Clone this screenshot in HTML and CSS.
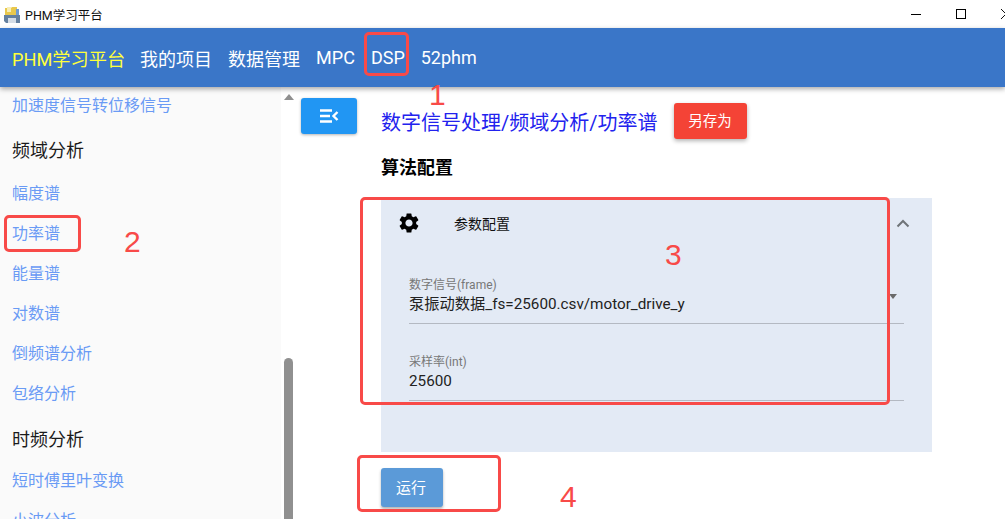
FILE: index.html
```html
<!DOCTYPE html>
<html lang="zh">
<head>
<meta charset="utf-8">
<title>PHM学习平台</title>
<link rel="stylesheet" href="styles.css">
</head>
<body>
<div class="app">
  <header class="titlebar">
    <svg class="app-icon" width="16" height="17" viewBox="0 0 16 17">
      <path d="M1 2h6l1-1h5v9H1z" fill="#e9c84c"/>
      <rect x="3" y="1" width="4" height="5" fill="#f7eeb8"/>
      <rect x="12" y="3" width="3" height="7" fill="#6f9bd0"/>
      <path d="M0 9h16v8H2l-2-2z" fill="#64809f"/>
      <rect x="4" y="12" width="8" height="5" fill="#d5dde6"/>
    </svg>
    <span class="window-title">PHM学习平台</span>
    <div class="window-controls">
      <span class="ctl-min"></span>
      <span class="ctl-max"></span>
      <svg class="ctl-close" width="10" height="10" viewBox="0 0 10 10"><path d="M0 0l10 10M10 0L0 10" stroke="#111" fill="none"/></svg>
    </div>
  </header>
  <nav class="toolbar">
    <a class="brand">PHM学习平台</a>
    <a class="nav-link">我的项目</a>
    <a class="nav-link">数据管理</a>
    <a class="nav-link">MPC</a>
    <a class="nav-link">DSP</a>
    <a class="nav-link">52phm</a>
  </nav>
  <div class="content">
    <aside class="sidebar">
      <ul class="menu">
        <li class="menu-item">加速度信号转位移信号</li>
        <li class="menu-head">频域分析</li>
        <li class="menu-item">幅度谱</li>
        <li class="menu-item">功率谱</li>
        <li class="menu-item">能量谱</li>
        <li class="menu-item">对数谱</li>
        <li class="menu-item">倒频谱分析</li>
        <li class="menu-item">包络分析</li>
        <li class="menu-head">时频分析</li>
        <li class="menu-item">短时傅里叶变换</li>
        <li class="menu-item">小波分析</li>
      </ul>
      <div class="scrollbar">
        <span class="scroll-arrow"></span>
        <span class="scroll-thumb"></span>
      </div>
    </aside>
    <main class="main">
      <button class="toggle">
        <svg width="20" height="14" viewBox="0 0 20 14"><path d="M1 1.500h12M1 7h10M1 12.500h12" stroke="#fff" stroke-width="2.400" fill="none"/><path d="M18.500 3l-4 4 4 4" stroke="#fff" stroke-width="2.400" fill="none"/></svg>
      </button>
      <section class="page">
        <div class="page-head">
          <h1 class="crumb">数字信号处理/频域分析/功率谱</h1>
          <button class="save">另存为</button>
        </div>
        <h2 class="section-title">算法配置</h2>
        <div class="panel">
          <div class="panel-head">
            <svg class="gear" width="24" height="24" viewBox="0 0 24 24"><path fill="#000" d="M19.140 12.940c.04-.3.06-.61.06-.94 0-.32-.02-.64-.07-.94l2.030-1.580a.49.49 0 0 0 .12-.61l-1.920-3.320a.488.488 0 0 0-.59-.22l-2.390.96c-.5-.38-1.030-.7-1.620-.94l-.36-2.540a.484.484 0 0 0-.48-.41h-3.840c-.24 0-.43.17-.47.41l-.36 2.540c-.59.24-1.130.57-1.620.94l-2.390-.96c-.22-.08-.47 0-.59.22L2.740 8.870c-.12.21-.08.47.12.61l2.030 1.580c-.05.3-.09.63-.09.94s.02.64.07.94l-2.030 1.580a.49.49 0 0 0-.12.61l1.920 3.320c.12.22.37.29.59.22l2.390-.96c.5.38 1.030.7 1.620.94l.36 2.540c.05.24.24.41.48.41h3.840c.24 0 .44-.17.47-.41l.36-2.540c.59-.24 1.130-.56 1.620-.94l2.390.96c.22.08.47 0 .59-.22l1.920-3.320c.12-.22.07-.47-.12-.61l-2.010-1.580zM12 15.600c-1.980 0-3.600-1.620-3.600-3.600s1.620-3.600 3.600-3.600 3.600 1.620 3.600 3.600-1.620 3.600-3.600 3.600z"/></svg>
            <span class="panel-title">参数配置</span>
            <svg class="chevron" width="14" height="9" viewBox="0 0 14 9"><path d="M1.500 7.500L7 2l5.500 5.500" stroke="#6f7478" stroke-width="2" fill="none"/></svg>
          </div>
          <div class="field">
            <label class="field-label">数字信号(frame)</label>
            <div class="field-value">泵振动数据_fs=25600.csv/motor_drive_y</div>
            <span class="select-arrow"></span>
          </div>
          <div class="field">
            <label class="field-label">采样率(int)</label>
            <div class="field-value">25600</div>
          </div>
        </div>
        <button class="run">运行</button>
      </section>
    </main>
  </div>
</div>
<div class="mark mark-1"></div><span class="mark-num num-1">1</span>
<div class="mark mark-2"></div><span class="mark-num num-2">2</span>
<div class="mark mark-3"></div><span class="mark-num num-3">3</span>
<div class="mark mark-4"></div><span class="mark-num num-4">4</span>
</body>
</html>
```
FILE: styles.css
```css
* { box-sizing: border-box; }
html, body { margin: 0; padding: 0; height: 100%; overflow: hidden; background: #fff; }
body { font-family: Roboto, "Noto Sans CJK SC", sans-serif; color: #000; position: relative; }
.app { display: flex; flex-direction: column; height: 519px; }

.titlebar { height: 28px; flex: none; display: flex; align-items: center; padding-left: 4px; background: #fff; position: relative; }
.app-icon { flex: none; margin-right: 5px; }
.window-title { font-size: 12.500px; color: #111; }
.window-controls { margin-left: auto; display: flex; align-items: center; gap: 35px; margin-right: -6px; }
.ctl-min { width: 10px; height: 1px; background: #000; }
.ctl-max { width: 10px; height: 10px; border: 1px solid #000; }
.ctl-close { flex: none; }

.toolbar { height: 59px; flex: none; display: flex; align-items: center; gap: 16px; padding: 0 12px; background: #3a76c8; color: #fff; box-shadow: 0 2px 5px rgba(0,0,0,.35); position: relative; z-index: 2; }
.brand { font-size: 18.200px; margin-right: -1px; color: #ffff3b; }
.nav-link { font-size: 18px; color: #fff; }

.content { flex: 1; min-height: 0; display: flex; }
.sidebar { width: 296px; flex: none; display: flex; background: #fafafa; overflow: hidden; }
.menu { flex: 1; list-style: none; margin: -1px 0 0; padding: 0 0 0 12px; }
.menu-item { height: 40px; line-height: 40px; font-size: 16px; color: #6a9bf5; white-space: nowrap; }
.menu-head { height: 48px; line-height: 50px; font-size: 18px; color: #1b1b1b; }
.menu-item + .menu-head { height: 47px; line-height: 52px; }
.menu-item:first-child + .menu-head { height: 48px; line-height: 50px; }
.scrollbar { width: 15px; flex: none; position: relative; background: #fff; }
.scroll-arrow { position: absolute; left: 3px; top: 7px; border: 5px solid transparent; border-top: 0; border-bottom: 6px solid #8f8f8f; }
.scroll-thumb { position: absolute; left: 3px; top: 271px; width: 9px; height: 170px; border-radius: 5px 5px 0 0; background: #909090; }

.main { flex: 1; min-width: 0; display: flex; align-items: flex-start; padding: 11px 0 0 5px; gap: 24px; }
.toggle { width: 56px; height: 36px; flex: none; display: flex; align-items: center; justify-content: center; border: 0; border-radius: 3px; background: #2196f3; box-shadow: 0 1px 3px rgba(0,0,0,.3); padding: 0; }
.page { width: 551px; flex: none; }
.page-head { display: flex; align-items: center; gap: 16px; margin-top: 5px; }
.crumb { margin: 0; font-size: 20px; font-weight: 400; color: #2222ee; }
.save { width: 73px; height: 36px; border: 0; border-radius: 3px; background: #f44336; color: #fff; font: 14.500px Roboto, "Noto Sans CJK SC", sans-serif; box-shadow: 0 2px 4px rgba(0,0,0,.3); padding: 0 0 3px; }
.section-title { margin: 16px 0 17px; font-size: 18px; line-height: 26px; font-weight: 700; color: #000; }
.panel { height: 254px; background: #e3eaf5; padding: 0 28px; }
.panel-head { height: 50px; display: flex; align-items: center; position: relative; }
.gear { flex: none; margin-left: -12px; }
.panel-title { margin-left: 33px; font-size: 14px; color: #111; }
.chevron { position: absolute; right: -6px; top: 21px; }
.field { width: 495px; border-bottom: 1px solid #b4b9c2; position: relative; height: 46px; margin-top: 30px; }
.field + .field { margin-top: 31px; }
.field-label { display: block; font-size: 12px; line-height: 14px; color: #777; }
.field-value { font-size: 15.250px; line-height: 24px; color: #222; }
.select-arrow { position: absolute; right: 7px; top: 16px; border: 4px solid transparent; border-bottom: 0; border-top: 5px solid #6a6a6a; }
.run { display: block; width: 62px; height: 39px; margin-top: 16px; border: 0; border-radius: 3px; background: #5b9ad8; color: #fff; font: 15px Roboto, "Noto Sans CJK SC", sans-serif; box-shadow: 0 2px 3px rgba(0,0,0,.3); padding: 0 2px 2px 0; }

.mark { position: absolute; border: 3px solid #f84a48; border-radius: 5px; z-index: 5; pointer-events: none; }
.mark-1 { left: 364px; top: 32px; width: 45px; height: 44px; }
.mark-2 { left: 4px; top: 215px; width: 77px; height: 37px; }
.mark-3 { left: 360px; top: 197px; width: 530px; height: 208px; }
.mark-4 { left: 357px; top: 455px; width: 144px; height: 57px; }
.mark-num { position: absolute; z-index: 5; font-family: "Liberation Sans", sans-serif; font-size: 30px; line-height: 34px; color: #f84a48; }
.num-1 { left: 429px; top: 78px; }
.num-2 { left: 124px; top: 225px; }
.num-3 { left: 665px; top: 238px; }
.num-4 { left: 560px; top: 480px; }
```
